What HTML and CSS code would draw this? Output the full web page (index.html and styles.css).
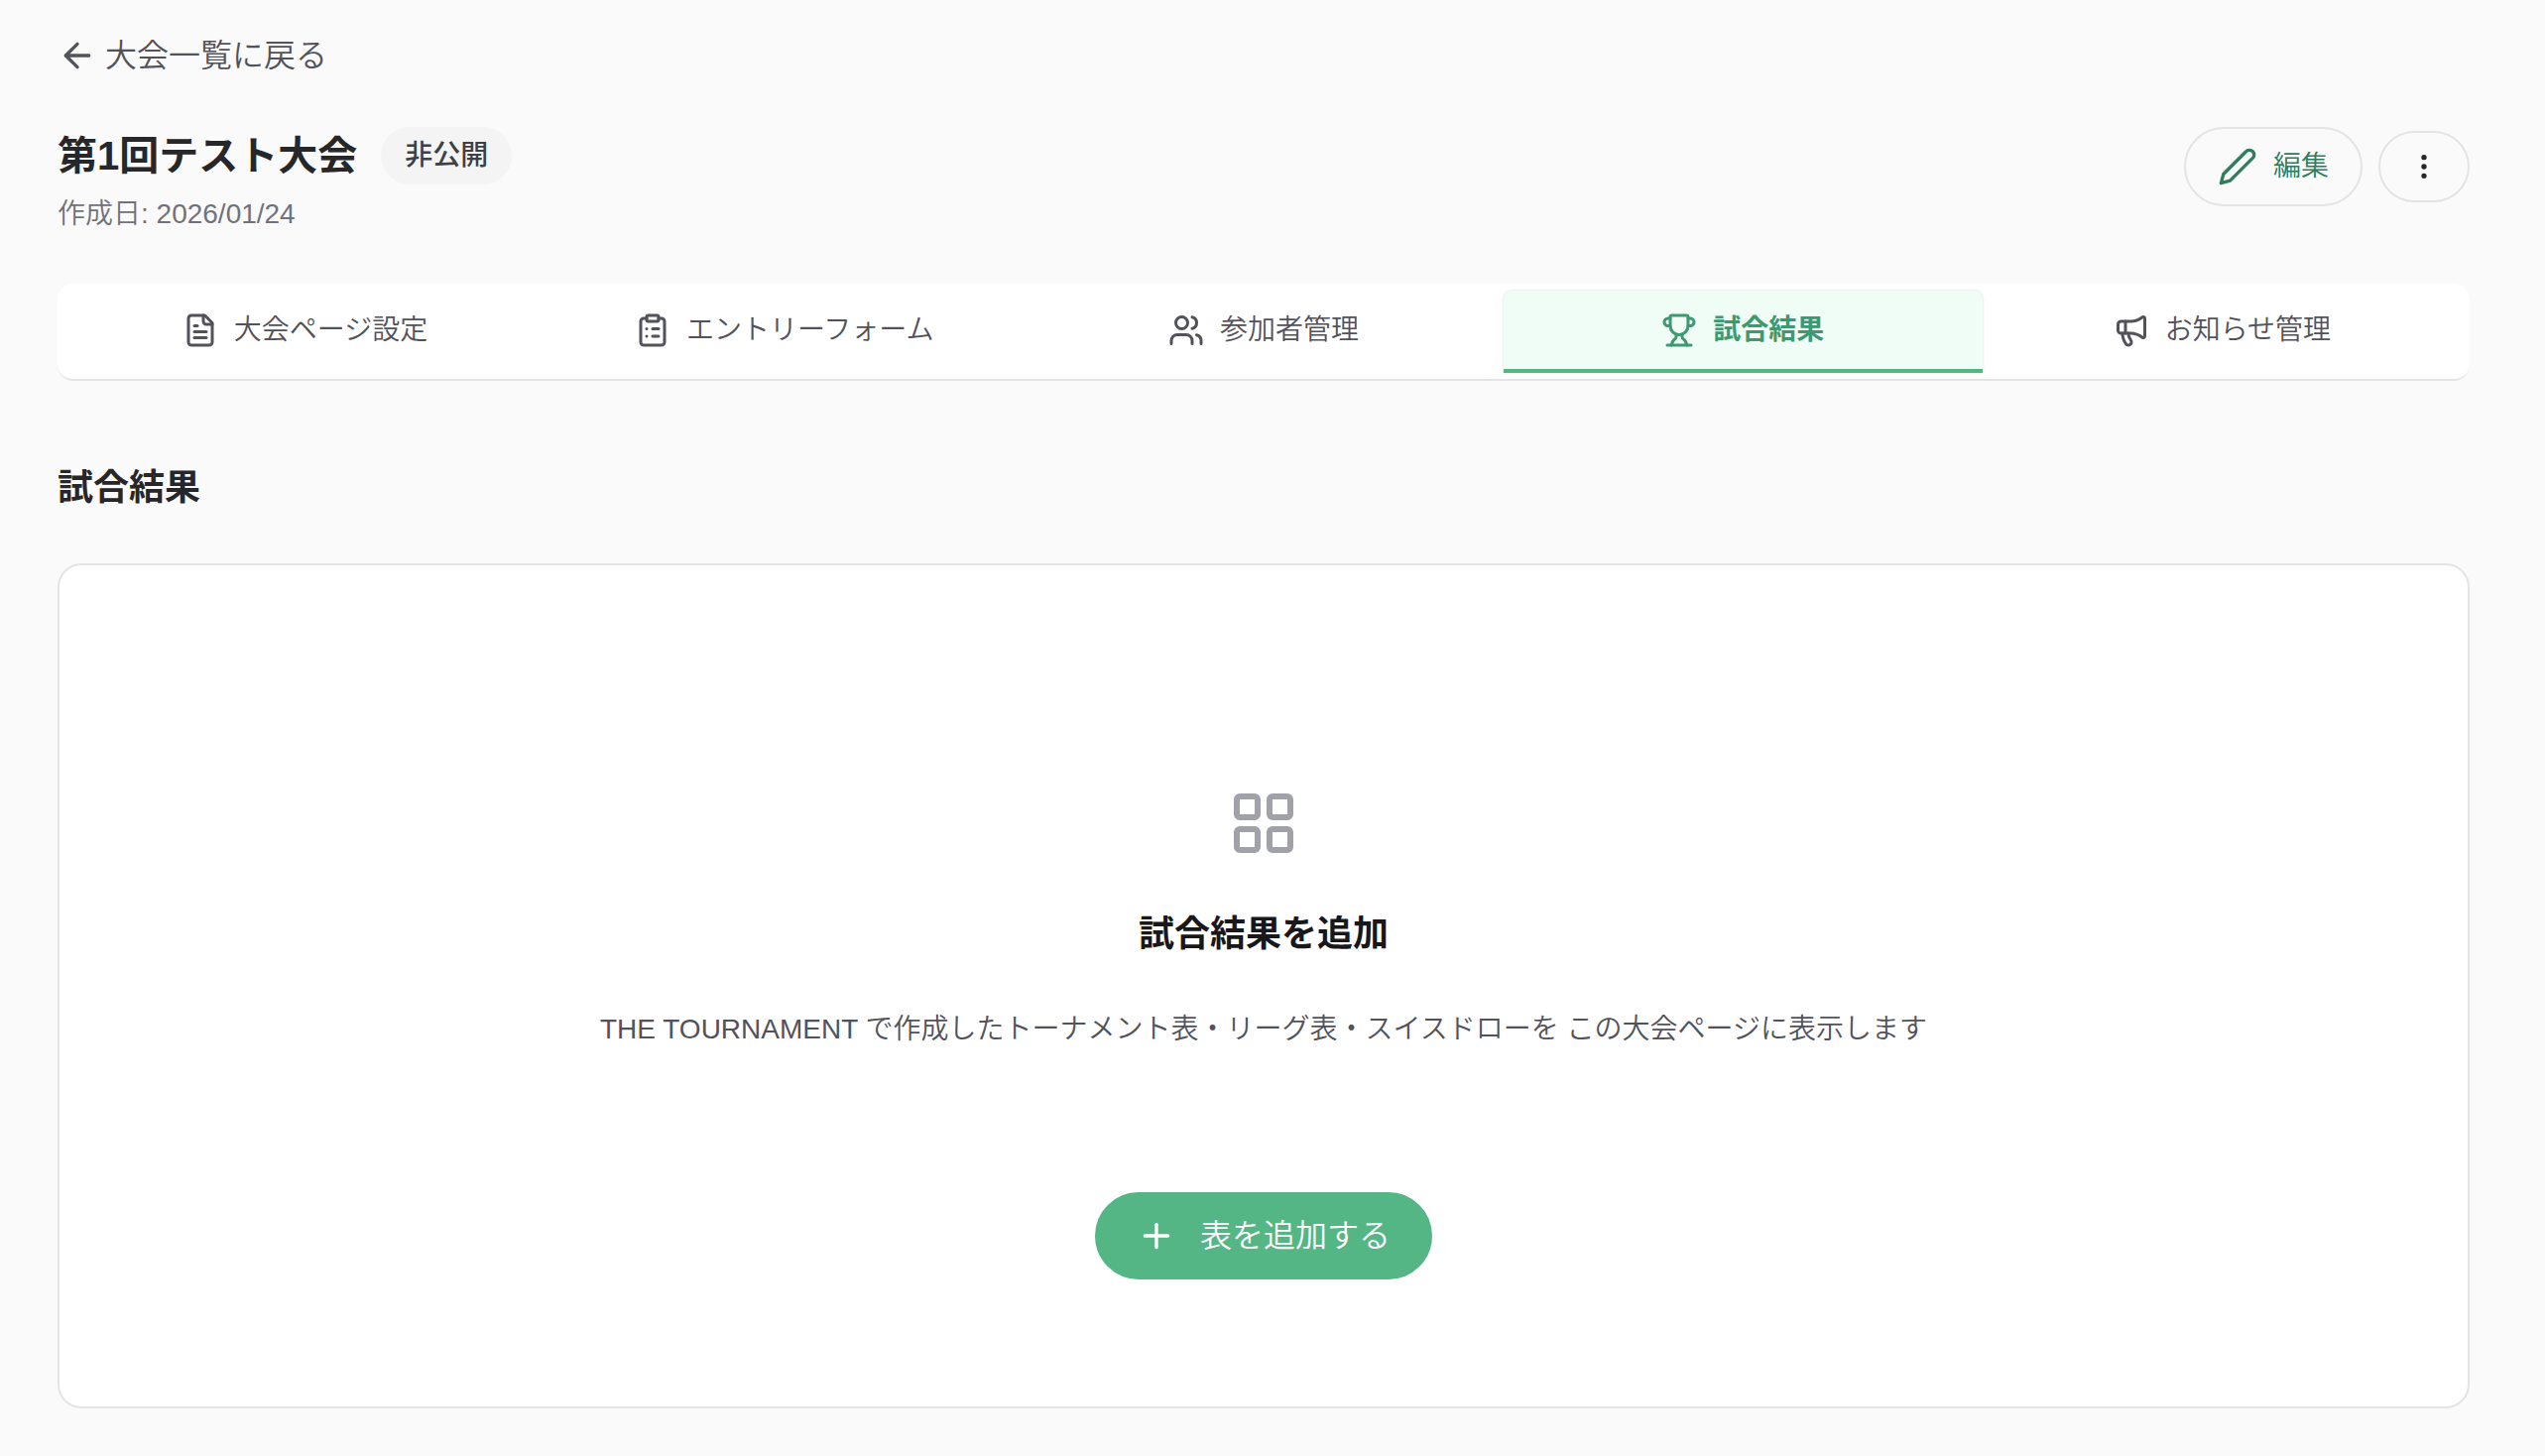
FILE: index.html
```html
<!DOCTYPE html>
<html lang="ja">

<head>
    <meta charset="UTF-8">
    <meta name="viewport" content="width=device-width, initial-scale=1.0">
    <title>第1回テスト大会</title>
    <link rel="stylesheet" href="styles.css">
</head>

<body>
    <a class="back" href="#">
        <svg class="icon icon-md" viewBox="0 0 24 24"><path d="m12 19-7-7 7-7"/><path d="M19 12H5"/></svg>
        大会一覧に戻る
    </a>

    <header class="page-header">
        <div>
            <div class="title-row">
                <h1>第1回テスト大会</h1>
                <span class="badge">非公開</span>
            </div>
            <p class="created">作成日: 2026/01/24</p>
        </div>
        <div class="actions">
            <button class="btn btn-edit" type="button">
                <svg class="icon icon-md" viewBox="0 0 24 24"><path d="M17 3a2.85 2.83 0 1 1 4 4L7.5 20.5 2 22l1.5-5.5Z"/></svg>
                編集
            </button>
            <button class="btn btn-more" type="button" aria-label="メニュー">
                <svg class="icon icon-xs" viewBox="0 0 24 24"><circle cx="12" cy="12" r="1"/><circle cx="12" cy="5" r="1"/><circle cx="12" cy="19" r="1"/></svg>
            </button>
        </div>
    </header>

    <nav class="tabs">
        <a class="tab" href="#">
            <svg class="icon icon-sm" viewBox="0 0 24 24"><path d="M15 2H6a2 2 0 0 0-2 2v16a2 2 0 0 0 2 2h12a2 2 0 0 0 2-2V7Z"/><path d="M14 2v4a2 2 0 0 0 2 2h4"/><path d="M10 9H8"/><path d="M16 13H8"/><path d="M16 17H8"/></svg>
            大会ページ設定
        </a>
        <a class="tab" href="#">
            <svg class="icon icon-sm" viewBox="0 0 24 24"><rect width="8" height="4" x="8" y="2" rx="1"/><path d="M16 4h2a2 2 0 0 1 2 2v14a2 2 0 0 1-2 2H6a2 2 0 0 1-2-2V6a2 2 0 0 1 2-2h2"/><path d="M12 11h4"/><path d="M12 16h4"/><path d="M8 11h.01"/><path d="M8 16h.01"/></svg>
            エントリーフォーム
        </a>
        <a class="tab" href="#">
            <svg class="icon icon-sm" viewBox="0 0 24 24"><path d="M16 21v-2a4 4 0 0 0-4-4H6a4 4 0 0 0-4 4v2"/><circle cx="9" cy="7" r="4"/><path d="M22 21v-2a4 4 0 0 0-3-3.87"/><path d="M16 3.13a4 4 0 0 1 0 7.75"/></svg>
            参加者管理
        </a>
        <a class="tab active" href="#" aria-current="page">
            <svg class="icon icon-sm" viewBox="0 0 24 24"><path d="M10 14.66v1.626a2 2 0 0 1-.976 1.696A5 5 0 0 0 7 21.978"/><path d="M14 14.66v1.626a2 2 0 0 0 .976 1.696A5 5 0 0 1 17 21.978"/><path d="M18 9h1.5a1 1 0 0 0 0-5H18"/><path d="M4 22h16"/><path d="M6 9a6 6 0 0 0 12 0V3a1 1 0 0 0-1-1H7a1 1 0 0 0-1 1z"/><path d="M6 9H4.5a1 1 0 0 1 0-5H6"/></svg>
            試合結果
        </a>
        <a class="tab" href="#">
            <svg class="icon icon-sm" viewBox="0 0 24 24"><path d="M11 6a13 13 0 0 0 8.4-2.8A1 1 0 0 1 21 4v12a1 1 0 0 1-1.6.8A13 13 0 0 0 11 14H5a2 2 0 0 1-2-2V8a2 2 0 0 1 2-2z"/><path d="M6 14a12 12 0 0 0 2.4 7.2 2 2 0 0 0 3.2-2.4A8 8 0 0 1 10 14"/><path d="M8 6v8"/></svg>
            お知らせ管理
        </a>
    </nav>

    <main>
        <h2>試合結果</h2>
        <section class="card">
            <svg class="icon icon-xl" viewBox="0 0 24 24"><rect width="7" height="7" x="3" y="3" rx="1"/><rect width="7" height="7" x="14" y="3" rx="1"/><rect width="7" height="7" x="14" y="14" rx="1"/><rect width="7" height="7" x="3" y="14" rx="1"/></svg>
            <h3>試合結果を追加</h3>
            <p class="description">THE TOURNAMENT で作成したトーナメント表・リーグ表・スイスドローを この大会ページに表示します</p>
            <button class="btn btn-add" type="button">
                <svg class="icon icon-md" viewBox="0 0 24 24"><path d="M5 12h14"/><path d="M12 5v14"/></svg>
                表を追加する
            </button>
        </section>
    </main>
</body>

</html>
```
FILE: styles.css
```css
* {
    margin: 0;
    padding: 0;
    box-sizing: border-box;
}

body {
    background: #fafafa;
    color: #27272a;
    font-family: "Liberation Sans", "Noto Sans CJK JP", sans-serif;
    font-size: 28px;
    font-weight: 350;
    line-height: 40px;
    padding: 32px 76px 48px 58px;
}

a {
    color: inherit;
    text-decoration: none;
}

.icon {
    flex-shrink: 0;
    fill: none;
    stroke: currentColor;
    stroke-width: 2;
    stroke-linecap: round;
    stroke-linejoin: round;
}

.icon-xs {
    width: 32px;
    height: 32px;
}

.icon-sm {
    width: 36px;
    height: 36px;
}

.icon-md {
    width: 40px;
    height: 40px;
}

.icon-xl {
    width: 72px;
    height: 72px;
    color: #a1a1aa;
}

.back {
    display: flex;
    align-items: center;
    gap: 8px;
    width: fit-content;
    height: 48px;
    font-size: 32px;
    color: #52525b;
}

/* Header */
.page-header {
    display: flex;
    justify-content: space-between;
    align-items: flex-start;
    margin-top: 48px;
}

.title-row {
    display: flex;
    align-items: center;
    gap: 24px;
}

h1 {
    font-size: 40px;
    font-weight: 700;
    line-height: 56px;
}

.badge {
    padding: 9px 24px;
    border-radius: 32px;
    background: #f4f4f5;
    color: #3f3f46;
    font-weight: 500;
}

.created {
    margin-top: 10px;
    color: #71717a;
}

.actions {
    display: flex;
    align-items: center;
    gap: 16px;
}

.btn {
    display: flex;
    align-items: center;
    gap: 16px;
    border: 2px solid #e4e4e7;
    border-radius: 48px;
    background: transparent;
    font: inherit;
    cursor: pointer;
}

.btn-edit {
    height: 80px;
    padding: 0 32px;
    color: #2f7d5b;
}

.btn-more {
    height: 72px;
    padding: 0 28px;
    color: #27272a;
}

/* Tabs */
.tabs {
    display: grid;
    grid-template-columns: repeat(5, 1fr);
    margin-top: 50px;
    padding: 7px 8px 6px;
    border-bottom: 2px solid #e4e4e7;
    border-radius: 16px;
    background: #fff;
}

.tab {
    display: flex;
    justify-content: center;
    align-items: center;
    gap: 16px;
    height: 83px;
    border-bottom: 4px solid transparent;
    color: #52525b;
}

.tab.active {
    border-color: #55b685;
    border-radius: 8px 8px 0 0;
    background: #f0fdf7;
    box-shadow: 0 0 3px rgba(0, 0, 0, 0.15);
    color: #3d9970;
    font-weight: 700;
}

h2,
h3 {
    font-size: 36px;
    font-weight: 700;
    line-height: 56px;
}

h2 {
    margin: 80px 0 48px;
}

/* Empty state */
.card {
    display: flex;
    flex-direction: column;
    align-items: center;
    padding: 224px 48px 128px;
    border: 2px solid #e4e4e7;
    border-radius: 24px;
    background: #fff;
}

h3 {
    margin-top: 48px;
    color: #18181b;
}

.description {
    margin-top: 48px;
    color: #52525b;
    text-align: center;
}

.btn-add {
    gap: 24px;
    height: 88px;
    margin-top: 144px;
    padding: 0 40px;
    border-color: #55b685;
    background: #55b685;
    color: #fff;
    font-size: 32px;
}
```
